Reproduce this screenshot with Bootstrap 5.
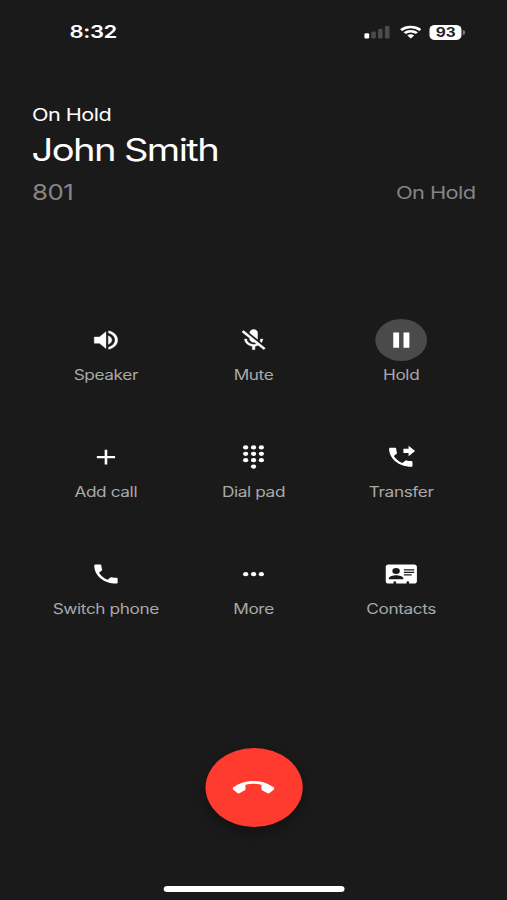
<!DOCTYPE html>
<html lang="en">
<head>
<meta charset="utf-8">
<meta name="viewport" content="width=device-width, initial-scale=1">
<title>Call on hold</title>
<link rel="stylesheet" href="https://cdn.jsdelivr.net/npm/bootstrap@5.3.0/dist/css/bootstrap.min.css">
<style>
html, body { background: #1a1a1a; height: 900px; overflow: hidden; }
body { font-family: Inter, "Liberation Sans", sans-serif; color: #fff; }
.phone { width: 412px; height: 900px; transform: scaleX(1.2306); transform-origin: 0 0; }
svg { display: block; fill: currentColor; }
.statusbar { height: 64px; padding: 0 34.4px 0 56.5px; }
.clock { font-size: 17.9px; font-weight: 600; letter-spacing: -.3px; line-height: 1; }
.battery { width: 26px; height: 15px; border-radius: 4.5px; background: #fff; color: #222; font-size: 12.5px; font-weight: 700; line-height: 15px; text-align: center; }
.wifi { margin: 0 7px 0 8px; }
.nub { width: 1.5px; height: 5px; border-radius: 0 2px 2px 0; background: #777; margin-left: 1px; }
.caller { padding: 39px 25.6px 0 26px; height: 246px; }
.state { font-size: 17.6px; line-height: 24px; letter-spacing: -.44px; }
.who { font-size: 31px; line-height: 40px; margin-top: 3px; letter-spacing: -1.3px; margin-left: -.4px; }
.meta { color: #858585; line-height: 30px; margin-top: 8px; }
.ext { font-size: 21px; letter-spacing: -.4px; }
.meta-state { font-size: 17.8px; letter-spacing: -.5px; }
.pad { padding: 0 26px; }
.key { height: 117px; color: #a9a9a9; }
.key svg { width: 26px; height: 26px; }
.glyph { width: 42px; height: 42px; color: #fff; margin-top: 9px; }
.glyph.active { background: #4a4a4a; }
.key-label { font-size: 14px; line-height: 20px; margin-top: 4.4px; letter-spacing: -.32px; white-space: nowrap; }
.hangup { width: 79px; height: 79px; background: #ff3b30; color: #fff; box-shadow: 0 5px 12px rgba(0,0,0,.35); margin-top: 87px; }
.home-bar { width: 147px; height: 6px; background: #fff; margin-bottom: 8px; }
</style>
</head>
<body>
<main class="phone d-flex flex-column">
  <div class="statusbar d-flex align-items-center justify-content-between flex-shrink-0">
    <div class="clock">8:32</div>
    <div class="d-flex align-items-center">
      <svg width="21" height="14" viewBox="0 0 21 14"><rect x="0" y="8.3" width="4" height="5.2" rx="1.2"/><g fill="#4b4b4b"><rect x="5.7" y="6.5" width="3.7" height="7" rx="1.1"/><rect x="11.2" y="3.8" width="3.7" height="9.7" rx="1.1"/><rect x="16.8" y="1" width="3.7" height="12.5" rx="1.1"/></g></svg>
      <svg class="wifi" width="17.6" height="14" viewBox="0 0 17 14" preserveAspectRatio="none"><g fill="none" stroke="#fff" stroke-width="2.4"><path d="M.9 5.1a10.8 10.8 0 0 1 15.2 0"/><path d="M3.7 8.2a6.8 6.8 0 0 1 9.6 0"/></g><path d="M8.5 13.4 5.8 10.6a3.9 3.9 0 0 1 5.4 0z"/></svg>
      <div class="battery">93</div>
      <div class="nub"></div>
    </div>
  </div>

  <header class="caller flex-shrink-0">
    <div class="state">On Hold</div>
    <div class="who">John Smith</div>
    <div class="meta d-flex justify-content-between"><span class="ext">801</span><span class="meta-state">On Hold</span></div>
  </header>

  <section class="pad flex-shrink-0">
    <div class="row g-0">
      <div class="col-4 key d-flex flex-column align-items-center">
        <div class="glyph d-flex align-items-center justify-content-center"><svg viewBox="-.4 -.4 24.6 24.6"><path stroke="currentColor" stroke-width=".3" d="M3 9v6h4l5 5V4L7 9H3zm10.8-1.03v8.05c1.68-.73 2.7-2.25 2.7-4.02s-1.02-3.29-2.7-4.03zM14 3.23v2.06c2.89.86 5 3.54 5 6.71s-2.11 5.85-5 6.71v2.06c4.01-.91 7-4.49 7-8.77s-2.99-7.86-7-8.77z"/></svg></div>
        <div class="key-label">Speaker</div>
      </div>
      <div class="col-4 key d-flex flex-column align-items-center">
        <div class="glyph d-flex align-items-center justify-content-center"><svg viewBox="-.4 -.4 24.6 24.6"><path stroke="currentColor" stroke-width=".4" d="M19 11h-1.7c0 .74-.16 1.43-.43 2.05l1.23 1.23c.56-.98.9-2.09.9-3.28zm-4.02.17c0-.06.02-.11.02-.17V5c0-1.66-1.34-3-3-3S9 3.34 9 5v.18l5.98 5.99zM4.27 3 3 4.27l6.01 6.01V11c0 1.66 1.33 3 2.99 3 .22 0 .44-.03.65-.08l1.66 1.66c-.71.33-1.5.52-2.31.52-2.76 0-5.3-2.1-5.3-5.1H5c0 3.41 2.72 6.23 6 6.72V21h2v-3.28c.91-.13 1.77-.45 2.54-.9L19.73 21 21 19.73 4.27 3z"/></svg></div>
        <div class="key-label">Mute</div>
      </div>
      <div class="col-4 key d-flex flex-column align-items-center">
        <div class="glyph active rounded-circle d-flex align-items-center justify-content-center"><svg viewBox="-.4 -.4 24.6 24.6"><path d="M5.8 19.2h4.5V4.8H5.8v14.4zm7.9-14.4v14.4h4.5V4.8h-4.5z"/></svg></div>
        <div class="key-label">Hold</div>
      </div>
      <div class="col-4 key d-flex flex-column align-items-center">
        <div class="glyph d-flex align-items-center justify-content-center"><svg viewBox="-.4 -.4 24.6 24.6"><path d="M19 13h-6v6h-2v-6H5v-2h6V5h2v6h6v2z"/></svg></div>
        <div class="key-label">Add call</div>
      </div>
      <div class="col-4 key d-flex flex-column align-items-center">
        <div class="glyph d-flex align-items-center justify-content-center"><svg viewBox="-.2 -.2 24.4 24.4"><circle cx="6" cy="3" r="2"/><circle cx="12" cy="3" r="2"/><circle cx="18" cy="3" r="2"/><circle cx="6" cy="9" r="2"/><circle cx="12" cy="9" r="2"/><circle cx="18" cy="9" r="2"/><circle cx="6" cy="15" r="2"/><circle cx="12" cy="15" r="2"/><circle cx="18" cy="15" r="2"/><circle cx="12" cy="21" r="2"/></svg></div>
        <div class="key-label">Dial pad</div>
      </div>
      <div class="col-4 key d-flex flex-column align-items-center">
        <div class="glyph d-flex align-items-center justify-content-center"><svg viewBox="0 -.6 24.6 24.6"><path d="M18 11l5-5-5-5v3h-4v4h4v3zm2 4.5c-1.25 0-2.45-.2-3.57-.57a1.02 1.02 0 0 0-1.02.24l-2.2 2.2a15.045 15.045 0 0 1-6.59-6.59l2.2-2.21a.96.96 0 0 0 .25-1A11.36 11.36 0 0 1 8.5 4c0-.55-.45-1-1-1H4c-.55 0-1 .45-1 1 0 9.39 7.61 17 17 17 .55 0 1-.45 1-1v-3.5c0-.55-.45-1-1-1z"/></svg></div>
        <div class="key-label">Transfer</div>
      </div>
      <div class="col-4 key d-flex flex-column align-items-center">
        <div class="glyph d-flex align-items-center justify-content-center"><svg viewBox="-.4 -.4 24.6 24.6"><path d="M20 15.5c-1.25 0-2.45-.2-3.57-.57a1.02 1.02 0 0 0-1.02.24l-2.2 2.2a15.045 15.045 0 0 1-6.59-6.59l2.2-2.21a.96.96 0 0 0 .25-1A11.36 11.36 0 0 1 8.5 4c0-.55-.45-1-1-1H4c-.55 0-1 .45-1 1 0 9.39 7.61 17 17 17 .55 0 1-.45 1-1v-3.5c0-.55-.45-1-1-1z"/></svg></div>
        <div class="key-label">Switch phone</div>
      </div>
      <div class="col-4 key d-flex flex-column align-items-center">
        <div class="glyph d-flex align-items-center justify-content-center"><svg viewBox="-.2 -.4 24.4 24.4"><circle cx="6" cy="12" r="2"/><circle cx="12" cy="12" r="2"/><circle cx="18" cy="12" r="2"/></svg></div>
        <div class="key-label">More</div>
      </div>
      <div class="col-4 key d-flex flex-column align-items-center">
        <div class="glyph d-flex align-items-center justify-content-center"><svg viewBox="-.4 -.4 24.6 24.6"><path fill-rule="evenodd" d="M2 3h20c1.05 0 2 .95 2 2v14c0 1.05-.95 2-2 2h-4v-1.2a1 1 0 0 0-2 0V21H8v-1.2a1 1 0 0 0-2 0V21H2c-1.05 0-2-.95-2-2V5c0-1.05.95-2 2-2zM14 7.5v1.2h8V7.5zm0 2.3V11h8V9.8zm0 2.3v1.2h6v-1.2zM8 13c-2 0-5.6 1.1-5.6 3.1v.8h11.2v-.8C13.6 14.1 10 13 8 13zM8 6.2a2.9 2.9 0 1 0 0 5.8 2.9 2.9 0 0 0 0-5.8z"/></svg></div>
        <div class="key-label">Contacts</div>
      </div>
    </div>
  </section>

  <div class="hangup rounded-circle d-flex align-items-center justify-content-center align-self-center flex-shrink-0">
    <svg width="34" height="34" viewBox="0 0 24 24"><path d="M12 9c-1.6 0-3.15.25-4.6.72v3.1c0 .39-.23.74-.56.9-.98.49-1.87 1.12-2.66 1.85-.18.18-.43.28-.7.28-.28 0-.53-.11-.71-.29L.29 13.08c-.18-.17-.29-.42-.29-.7 0-.28.11-.53.29-.71C3.34 8.78 7.46 7 12 7s8.66 1.78 11.71 4.67c.18.18.29.43.29.71 0 .28-.11.53-.29.71l-2.48 2.48c-.18.18-.43.29-.71.29-.27 0-.52-.11-.7-.28-.79-.74-1.69-1.36-2.67-1.85-.33-.16-.56-.5-.56-.9v-3.1C15.15 9.25 13.6 9 12 9z"/></svg>
  </div>
  <div class="home-bar rounded-pill align-self-center mt-auto flex-shrink-0"></div>
</main>
<script src="https://cdn.jsdelivr.net/npm/bootstrap@5.3.0/dist/js/bootstrap.bundle.min.js"></script>
</body>
</html>
